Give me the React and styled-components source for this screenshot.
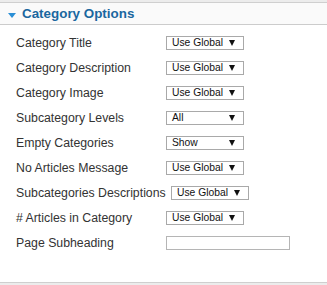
import React from "react";
import styled, { createGlobalStyle } from "styled-components";

const GlobalStyle = createGlobalStyle`
body{
    margin: 0;
    background-color: #ffffff;
    font-family: "Liberation Sans", Arial, sans-serif;
}
`

const Page = styled.div`
    width: 327px;
    height: 285px;
    display: flex;
    flex-direction: column;
    background-color: #ffffff;
    overflow: hidden;
`

const TopStrip = styled.div`
    height: 2px;
    background-color: #ececec;
    border-bottom: 1px solid #cfcfcf;
`

const Header = styled.div`
    height: 21px;
    display: flex;
    align-items: center;
    padding-left: 8px;
    background-color: #fafafa;
    border-bottom: 1px solid #cccccc;
`

const Caret = styled.span`
    width: 0;
    height: 0;
    border-left: 4px solid transparent;
    border-right: 4px solid transparent;
    border-top: 5px solid #2b8fd6;
    margin-right: 6px;
    margin-top: 3px;
`

const Title = styled.h3`
    margin: 0;
    font-size: 13.4px;
    font-weight: bold;
    color: #1a679f;
`

const Body = styled.div`
    flex: 1;
    padding: 5px 0 0 16px;
    display: flex;
    flex-direction: column;
`

const Row = styled.div`
    height: 25px;
    display: flex;
    align-items: center;
`

const Label = styled.label`
    min-width: 150px;
    margin-right: 5px;
    font-size: 12.3px;
    color: #333333;
    white-space: nowrap;
`

const Select = styled.div`
    box-sizing: border-box;
    width: 78px;
    height: 14px;
    margin-left: ${(p) => (p.$wide ? "0" : "-5px")};
    border: 1px solid #a9a9a9;
    display: flex;
    align-items: center;
    justify-content: space-between;
    padding: 0 8px 0 5px;
    font-size: 10.3px;
    color: #111111;
    background-color: #ffffff;
`

const Arrow = styled.span`
    width: 0;
    height: 0;
    border-left: 3px solid transparent;
    border-right: 3px solid transparent;
    border-top: 6px solid #111111;
`

const TextInput = styled.div`
    box-sizing: border-box;
    width: 124px;
    height: 14px;
    margin-left: -5px;
    border: 1px solid #b5b5b5;
    background-color: #ffffff;
`

const Footer = styled.div`
    height: 2px;
    background-color: #ececec;
    border-top: 1px solid #cfcfcf;
`

const rows = [
    { label: "Category Title", value: "Use Global" },
    { label: "Category Description", value: "Use Global" },
    { label: "Category Image", value: "Use Global" },
    { label: "Subcategory Levels", value: "All" },
    { label: "Empty Categories", value: "Show" },
    { label: "No Articles Message", value: "Use Global" },
    { label: "Subcategories Descriptions", value: "Use Global", wide: true },
    { label: "# Articles in Category", value: "Use Global" },
]

export default function App() {
    return (
        <Page>
            <GlobalStyle />
            <TopStrip />
            <Header>
                <Caret />
                <Title>Category Options</Title>
            </Header>
            <Body>
                {rows.map((r) => (
                    <Row key={r.label}>
                        <Label>{r.label}</Label>
                        <Select $wide={r.wide}>
                            <span>{r.value}</span>
                            <Arrow />
                        </Select>
                    </Row>
                ))}
                <Row>
                    <Label>Page Subheading</Label>
                    <TextInput />
                </Row>
            </Body>
            <Footer />
        </Page>
    )
}
